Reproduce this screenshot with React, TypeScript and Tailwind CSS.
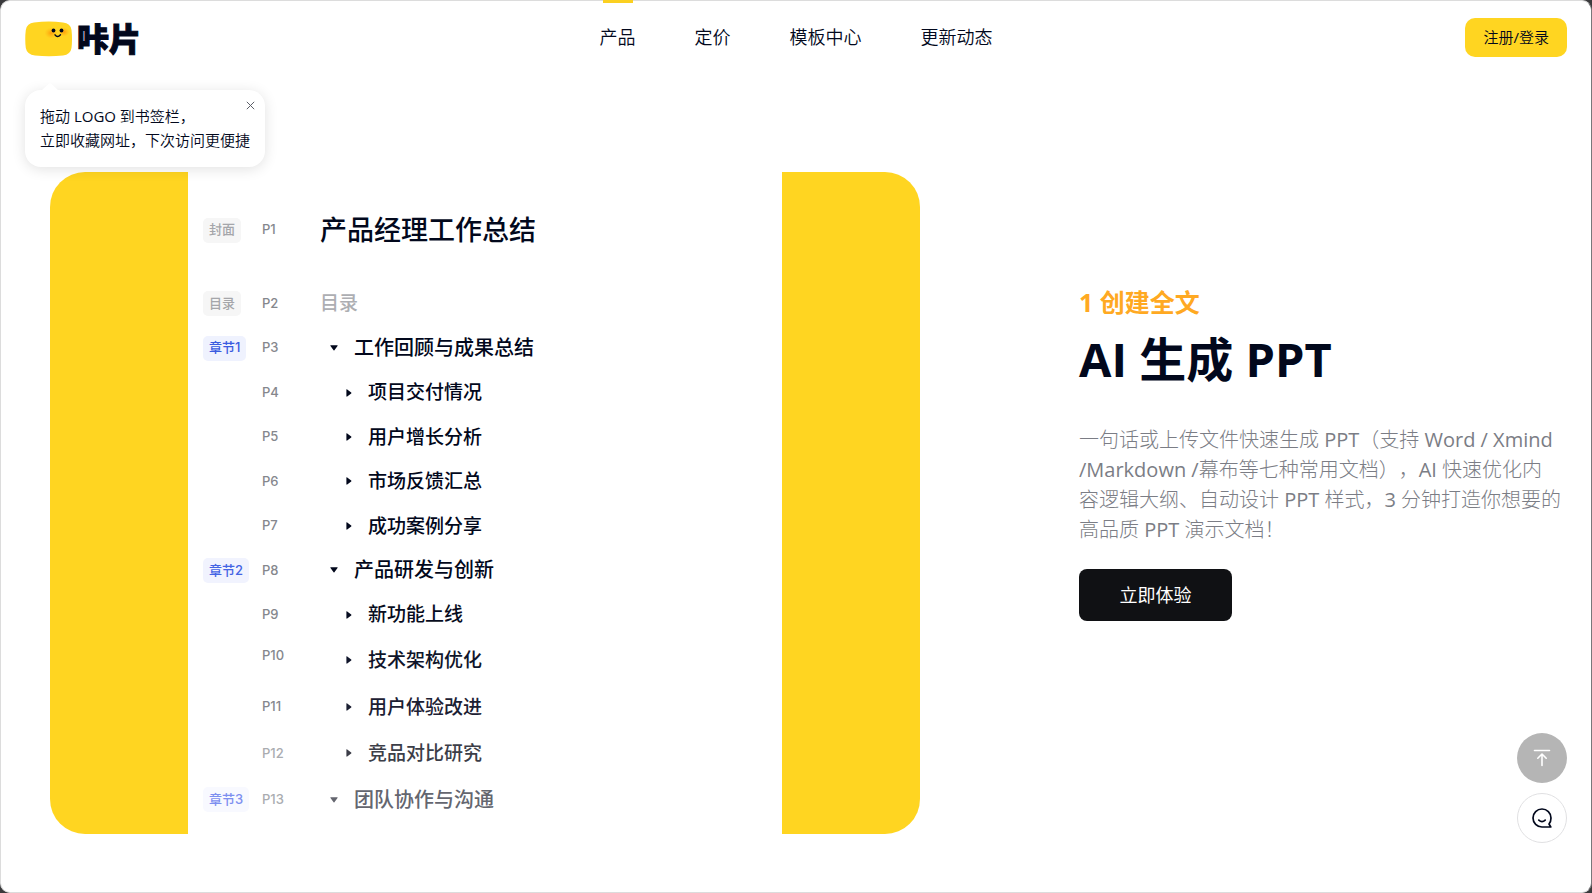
import React from "react";

const latin = "font-['Open_Sans','Noto_Sans_CJK_SC',sans-serif]";

type Row = {
  page: string;
  title: string;
  chapter?: string;
  text: string;
  badge?: string;
  raised?: boolean;
};

const firstRows: Row[] = [
  { page: "P3", title: "工作回顾与成果总结", chapter: "章节1", text: "text-[#02081c]", badge: "bg-[#eff2fe] text-[#3a5be0]" },
  { page: "P4", title: "项目交付情况", text: "text-[#02081c]" },
  { page: "P5", title: "用户增长分析", text: "text-[#02081c]" },
  { page: "P6", title: "市场反馈汇总", text: "text-[#02081c]" },
  { page: "P7", title: "成功案例分享", text: "text-[#02081c]" },
  { page: "P8", title: "产品研发与创新", chapter: "章节2", text: "text-[#02081c]", badge: "bg-[#f1f3fe] text-[#4464e4]" },
  { page: "P9", title: "新功能上线", text: "text-[#070c20]" },
];

const lastRows: Row[] = [
  { page: "P10", title: "技术架构优化", text: "text-[#10152a]", raised: true },
  { page: "P11", title: "用户体验改进", text: "text-[#1c2033]" },
  { page: "P12", title: "竞品对比研究", text: "text-[#3c3e48]" },
  { page: "P13", title: "团队协作与沟通", chapter: "章节3", text: "text-[#64666f]", badge: "bg-[#f8f9ff] text-[#7d8ff0]" },
];

function Badge({ children, tone }: { children: React.ReactNode; tone: string }) {
  return (
    <span
      className={`flex h-[25px] items-center rounded-[5px] px-1.5 font-['Inter','Noto_Sans_CJK_SC',sans-serif] text-[13px] font-medium ${tone}`}
    >
      {children}
    </span>
  );
}

function Page({ children, raised, faded }: { children: React.ReactNode; raised?: boolean; faded?: boolean }) {
  return (
    <span
      className={`w-[58px] font-['Inter',sans-serif] text-[13px] font-medium ${faded ? "text-[#aaacb0]" : "text-[#85878d]"} ${raised ? "pb-2.5" : ""}`}
    >
      {children}
    </span>
  );
}

function OutlineRow({ row }: { row: Row }) {
  const isChapter = Boolean(row.chapter);
  return (
    <li className={`flex flex-1 items-center ${row.text}`}>
      <div className="flex w-[59px]">{row.chapter && <Badge tone={row.badge ?? ""}>{row.chapter}</Badge>}</div>
      <Page raised={row.raised} faded={row.page === "P13" || row.page === "P12"}>
        {row.page}
      </Page>
      <div className={`flex items-center gap-4 ${isChapter ? "pl-2.5" : "pl-[26px]"}`}>
        {isChapter ? (
          <svg width="8" height="6" viewBox="0 0 8 6" fill="currentColor" aria-hidden="true">
            <path d="M.8.2h6.400c.4 0 .6.4.3.8L4.400 5.200a.5.5 0 0 1-.8 0L.5 1C.2.6.4.2.8.2Z" />
          </svg>
        ) : (
          <svg width="6" height="8" viewBox="0 0 6 8" fill="currentColor" aria-hidden="true">
            <path d="M.4.8v6.400c0 .4.4.6.8.3L5.200 4.400a.5.5 0 0 0 0-.8L1.200.5C.8.2.4.4.4.8Z" />
          </svg>
        )}
        <span className={`font-medium ${isChapter ? "text-[20px]" : "text-[19px]"}`}>{row.title}</span>
      </div>
    </li>
  );
}

function Logo() {
  return (
    <a href="#" aria-label="咔片" className="flex items-center gap-1 text-[#02081c]">
      <svg width="48" height="36" viewBox="0 0 48 36" aria-hidden="true">
        <defs>
          <radialGradient id="cheek">
            <stop offset="0" stopColor="#ff9d0a" />
            <stop offset="1" stopColor="#ffb414" stopOpacity="0" />
          </radialGradient>
        </defs>
        <path
          d="M9 1.500Q24-.5 38 1.500Q45.500 2 46.500 9Q47.500 18 46.500 27Q45.500 33.500 38 34.500Q24 36 10 34.500Q2 33.500.8 27Q-.3 18 .8 9Q2 2 9 1.500Z"
          fill="#ffd521"
        />
        <ellipse cx="26" cy="12" rx="6.500" ry="5.500" fill="url(#cheek)" />
        <ellipse cx="39" cy="11" rx="5.500" ry="4.500" fill="url(#cheek)" />
        <circle cx="28.500" cy="9.500" r="1.900" fill="#02081c" />
        <circle cx="36.500" cy="9.500" r="1.900" fill="#02081c" />
        <path d="M30 13.800Q32.500 17.300 35.500 13.800" fill="none" stroke="#02081c" strokeWidth="1.400" strokeLinecap="round" />
      </svg>
      <span className="text-[32px] leading-9 font-black [-webkit-text-stroke:1px_#02081c]">咔片</span>
    </a>
  );
}

const navItems = ["产品", "定价", "模板中心", "更新动态"];

export default function App() {
  return (
    <div className={`flex min-h-screen bg-[#3a3a3c] text-[#02081c] ${latin}`}>
      <div className="relative flex flex-1 flex-col rounded-[10px] border border-[#dcdcdc] border-r-[#77777a] bg-white">
        <header className="grid h-[72px] grid-cols-[1fr_auto_1fr] items-center px-6">
          <div className="relative flex items-center pt-1">
            <Logo />
            <div className="absolute top-[73px] left-0 z-10 rounded-2xl bg-white px-[15px] pt-3.5 pb-[15px] text-[15px] leading-6 whitespace-nowrap shadow-[0_2px_14px_rgba(0,0,0,0.12)]">
              <svg className="absolute -top-[7px] left-[16px]" width="18" height="8" viewBox="0 0 18 8" aria-hidden="true">
                <path d="M0 8L7.500 1Q9-.3 10.500 1L18 8Z" fill="#fff" />
              </svg>
              <p className="font-['Open_Sans','Noto_Sans_CJK_SC_DemiLight','Noto_Sans_CJK_SC',sans-serif]">
                拖动 LOGO 到书签栏，
                <br />
                立即收藏网址，下次访问更便捷
              </p>
              <button type="button" aria-label="关闭" className="absolute top-2.5 right-[9px] flex p-px">
                <svg width="9" height="9" viewBox="0 0 9 9" aria-hidden="true">
                  <path d="M.8.8l7.400 7.400M8.200.8L.8 8.200" stroke="#5c5f68" />
                </svg>
              </button>
            </div>
          </div>
          <nav className="flex h-full gap-[59px] font-['Noto_Sans_CJK_SC_DemiLight','Noto_Sans_CJK_SC',sans-serif] text-[18px]">
            {navItems.map((item, i) => (
              <a key={item} href="#" className="relative flex items-center pb-0.5">
                {i === 0 && <span className="absolute inset-x-[3px] -top-px h-[3px] bg-[#fbd021]" />}
                {item}
              </a>
            ))}
          </nav>
          <button
            type="button"
            className="h-[39px] justify-self-end rounded-[10px] bg-[#ffd521] px-[18px] font-['Open_Sans','Noto_Sans_CJK_SC_DemiLight','Noto_Sans_CJK_SC',sans-serif] text-[15px]"
          >
            注册/登录
          </button>
        </header>

        <main className="flex flex-1 items-start gap-[159px] pt-[99px] pr-6 pb-14 pl-[49px]">
          <section className="grid flex-1 grid-cols-[138px_1fr_138px] overflow-hidden rounded-[35px] bg-[#ffd521]">
            <div className="col-start-2 bg-white pt-9 pb-[11px] pl-[15px]">
              <div className="flex h-11 items-center">
                <div className="flex w-[59px]">
                  <Badge tone="bg-[#f6f6f6] text-[#a5a6aa]">封面</Badge>
                </div>
                <Page>P1</Page>
                <h2 className="text-[27px] leading-9 font-medium">产品经理工作总结</h2>
              </div>
              <div className="mt-[29px] flex h-[45px] items-center">
                <div className="flex w-[59px]">
                  <Badge tone="bg-[#f6f6f6] text-[#a5a6aa]">目录</Badge>
                </div>
                <Page>P2</Page>
                <h3 className="text-[19px] font-medium text-[#adaeb2]">目录</h3>
              </div>
              <ul className="flex h-[311px] flex-col">
                {firstRows.map((row) => (
                  <OutlineRow key={row.page} row={row} />
                ))}
              </ul>
              <ul className="flex h-[186px] flex-col">
                {lastRows.map((row) => (
                  <OutlineRow key={row.page} row={row} />
                ))}
              </ul>
            </div>
          </section>

          <section className="w-[488px] pt-[112px]">
            <p className="text-[25px] leading-9 font-bold text-[#ffa922]">1 创建全文</p>
            <h1 className="mt-[9px] text-[47px] leading-[60px] font-bold">AI 生成 PPT</h1>
            <p className="mt-9 font-['Open_Sans','Noto_Sans_CJK_SC_Light','Noto_Sans_CJK_SC',sans-serif] text-[20px] leading-[30px] whitespace-nowrap text-[#7b7d85] [text-spacing-trim:space-all]">
              一句话或上传文件快速生成 PPT（支持 Word / Xmind
              <br />
              /Markdown /幕布等七种常用文档），AI 快速优化内
              <br />
              容逻辑大纲、自动设计 PPT 样式，3 分钟打造你想要的
              <br />
              高品质 PPT 演示文档！
            </p>
            <button type="button" className="mt-6 h-[52px] w-[153px] rounded-lg bg-[#101114] text-[18px] text-white">
              立即体验
            </button>
          </section>
        </main>

        <div className="fixed right-[25px] bottom-[50px] flex flex-col gap-2.5">
          <button type="button" aria-label="回到顶部" className="flex size-[50px] items-center justify-center rounded-full bg-[#b5b5b5]">
            <svg width="18" height="18" viewBox="0 0 18 18" fill="none" stroke="#fff" strokeWidth="1.600" strokeLinecap="round" strokeLinejoin="round" aria-hidden="true">
              <path d="M1.500 1.500h15M9 16.500V5.500M4.800 9.200L9 5l4.200 4.200" />
            </svg>
          </button>
          <button type="button" aria-label="在线客服" className="flex size-[50px] items-center justify-center rounded-full border border-[#e0e0e2] bg-white">
            <svg width="20" height="20" viewBox="0 0 20 20" fill="none" stroke="#02081c" strokeWidth="1.700" strokeLinecap="round" strokeLinejoin="round" aria-hidden="true">
              <path d="M10 19A9 9 0 1 1 19 10Q19 13.600 17 16L18.800 19H10M6.800 12.200Q10 15.200 13.200 12.200" />
            </svg>
          </button>
        </div>
      </div>
    </div>
  );
}
